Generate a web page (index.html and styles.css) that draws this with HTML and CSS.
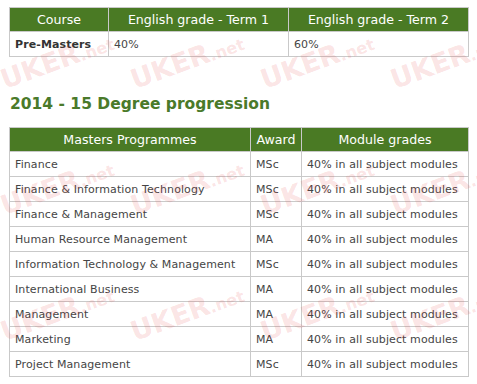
FILE: index.html
```html
<!DOCTYPE html>
<html lang="en">
<head>
<meta charset="utf-8">
<title>Degree progression</title>
<link rel="stylesheet" href="styles.css">
</head>
<body>
<div class="page">
  <table class="grid grid-top">
    <colgroup>
      <col class="c-course">
      <col class="c-term">
      <col class="c-term">
    </colgroup>
    <thead>
      <tr><th>Course</th><th>English grade - Term 1</th><th>English grade - Term 2</th></tr>
    </thead>
    <tbody>
      <tr><td class="strong">Pre-Masters</td><td>40%</td><td>60%</td></tr>
    </tbody>
  </table>

  <h2 class="title">2014 - 15 Degree progression</h2>

  <table class="grid grid-main">
    <colgroup>
      <col class="c-prog">
      <col class="c-award">
      <col class="c-grade">
    </colgroup>
    <thead>
      <tr><th>Masters Programmes</th><th>Award</th><th>Module grades</th></tr>
    </thead>
    <tbody>
      <tr><td>Finance</td><td>MSc</td><td>40% in all subject modules</td></tr>
      <tr><td>Finance &amp; Information Technology</td><td>MSc</td><td>40% in all subject modules</td></tr>
      <tr><td>Finance &amp; Management</td><td>MSc</td><td>40% in all subject modules</td></tr>
      <tr><td>Human Resource Management</td><td>MA</td><td>40% in all subject modules</td></tr>
      <tr><td>Information Technology &amp; Management</td><td>MSc</td><td>40% in all subject modules</td></tr>
      <tr><td>International Business</td><td>MA</td><td>40% in all subject modules</td></tr>
      <tr><td>Management</td><td>MA</td><td>40% in all subject modules</td></tr>
      <tr><td>Marketing</td><td>MA</td><td>40% in all subject modules</td></tr>
      <tr><td>Project Management</td><td>MSc</td><td>40% in all subject modules</td></tr>
    </tbody>
  </table>

  <div class="marks" aria-hidden="true">
    <span class="wm wm-a1">UKER<small>.net</small></span>
    <span class="wm wm-a2">UKER<small>.net</small></span>
    <span class="wm wm-a3">UKER<small>.net</small></span>
    <span class="wm wm-a4">UKER<small>.net</small></span>
    <span class="wm wm-b1">UKER<small>.net</small></span>
    <span class="wm wm-b2">UKER<small>.net</small></span>
    <span class="wm wm-b3">UKER<small>.net</small></span>
    <span class="wm wm-b4">UKER<small>.net</small></span>
    <span class="wm wm-c1">UKER<small>.net</small></span>
    <span class="wm wm-c2">UKER<small>.net</small></span>
    <span class="wm wm-c3">UKER<small>.net</small></span>
    <span class="wm wm-c4">UKER<small>.net</small></span>
  </div>
</div>
</body>
</html>
```

FILE: styles.css
```css
html, body {
  margin: 0;
  padding: 0;
  background: #ffffff;
}

.page {
  position: relative;
  padding: 7px 9px 0 9px;
  width: 459px;
  height: 377px;
  overflow: hidden;
  font-family: "DejaVu Sans", Verdana, sans-serif;
  color: #444444;
}

.grid {
  border-collapse: collapse;
  table-layout: fixed;
  width: 459px;
  position: relative;
  z-index: 1;
}

.grid th,
.grid td {
  border: 1px solid #c9c9c9;
  padding: 0 5px;
  text-align: left;
  white-space: nowrap;
}

.grid th {
  background: #4a7a24;
  color: #ffffff;
  font-weight: normal;
  font-size: 12.6px;
  text-align: center;
  height: 23px;
}

.grid td {
  font-size: 11px;
  letter-spacing: 0.1px;
  height: 24px;
  color: #454545;
}

.grid-top th {
  height: 23px;
}

.grid td.strong {
  font-weight: bold;
  color: #333333;
}

.c-course { width: 99px; }
.c-term { width: 180px; }
.c-prog { width: 241px; }
.c-award { width: 51px; }
.c-grade { width: 167px; }

.title {
  margin: 0;
  padding: 38px 0 14px 1px;
  font-size: 15.5px;
  font-weight: bold;
  line-height: 18px;
  color: #4a7a2a;
  position: relative;
  z-index: 1;
}

.marks {
  position: absolute;
  inset: 0;
  pointer-events: none;
  z-index: 2;
}

.wm {
  position: absolute;
  font-family: "DejaVu Sans", Verdana, sans-serif;
  font-weight: bold;
  font-size: 27px;
  line-height: 1;
  color: rgba(228, 60, 60, 0.15);
  transform: rotate(-20deg);
  transform-origin: left bottom;
  white-space: nowrap;
}

.wm small {
  font-size: 16px;
}

.wm-a1 { left: 6px; top: 66px; }
.wm-a2 { left: 136px; top: 66px; }
.wm-a3 { left: 266px; top: 66px; }
.wm-a4 { left: 396px; top: 66px; }
.wm-b1 { left: 6px; top: 192px; }
.wm-b2 { left: 136px; top: 192px; }
.wm-b3 { left: 266px; top: 192px; }
.wm-b4 { left: 396px; top: 192px; }
.wm-c1 { left: 6px; top: 318px; }
.wm-c2 { left: 136px; top: 318px; }
.wm-c3 { left: 266px; top: 318px; }
.wm-c4 { left: 396px; top: 318px; }
```
